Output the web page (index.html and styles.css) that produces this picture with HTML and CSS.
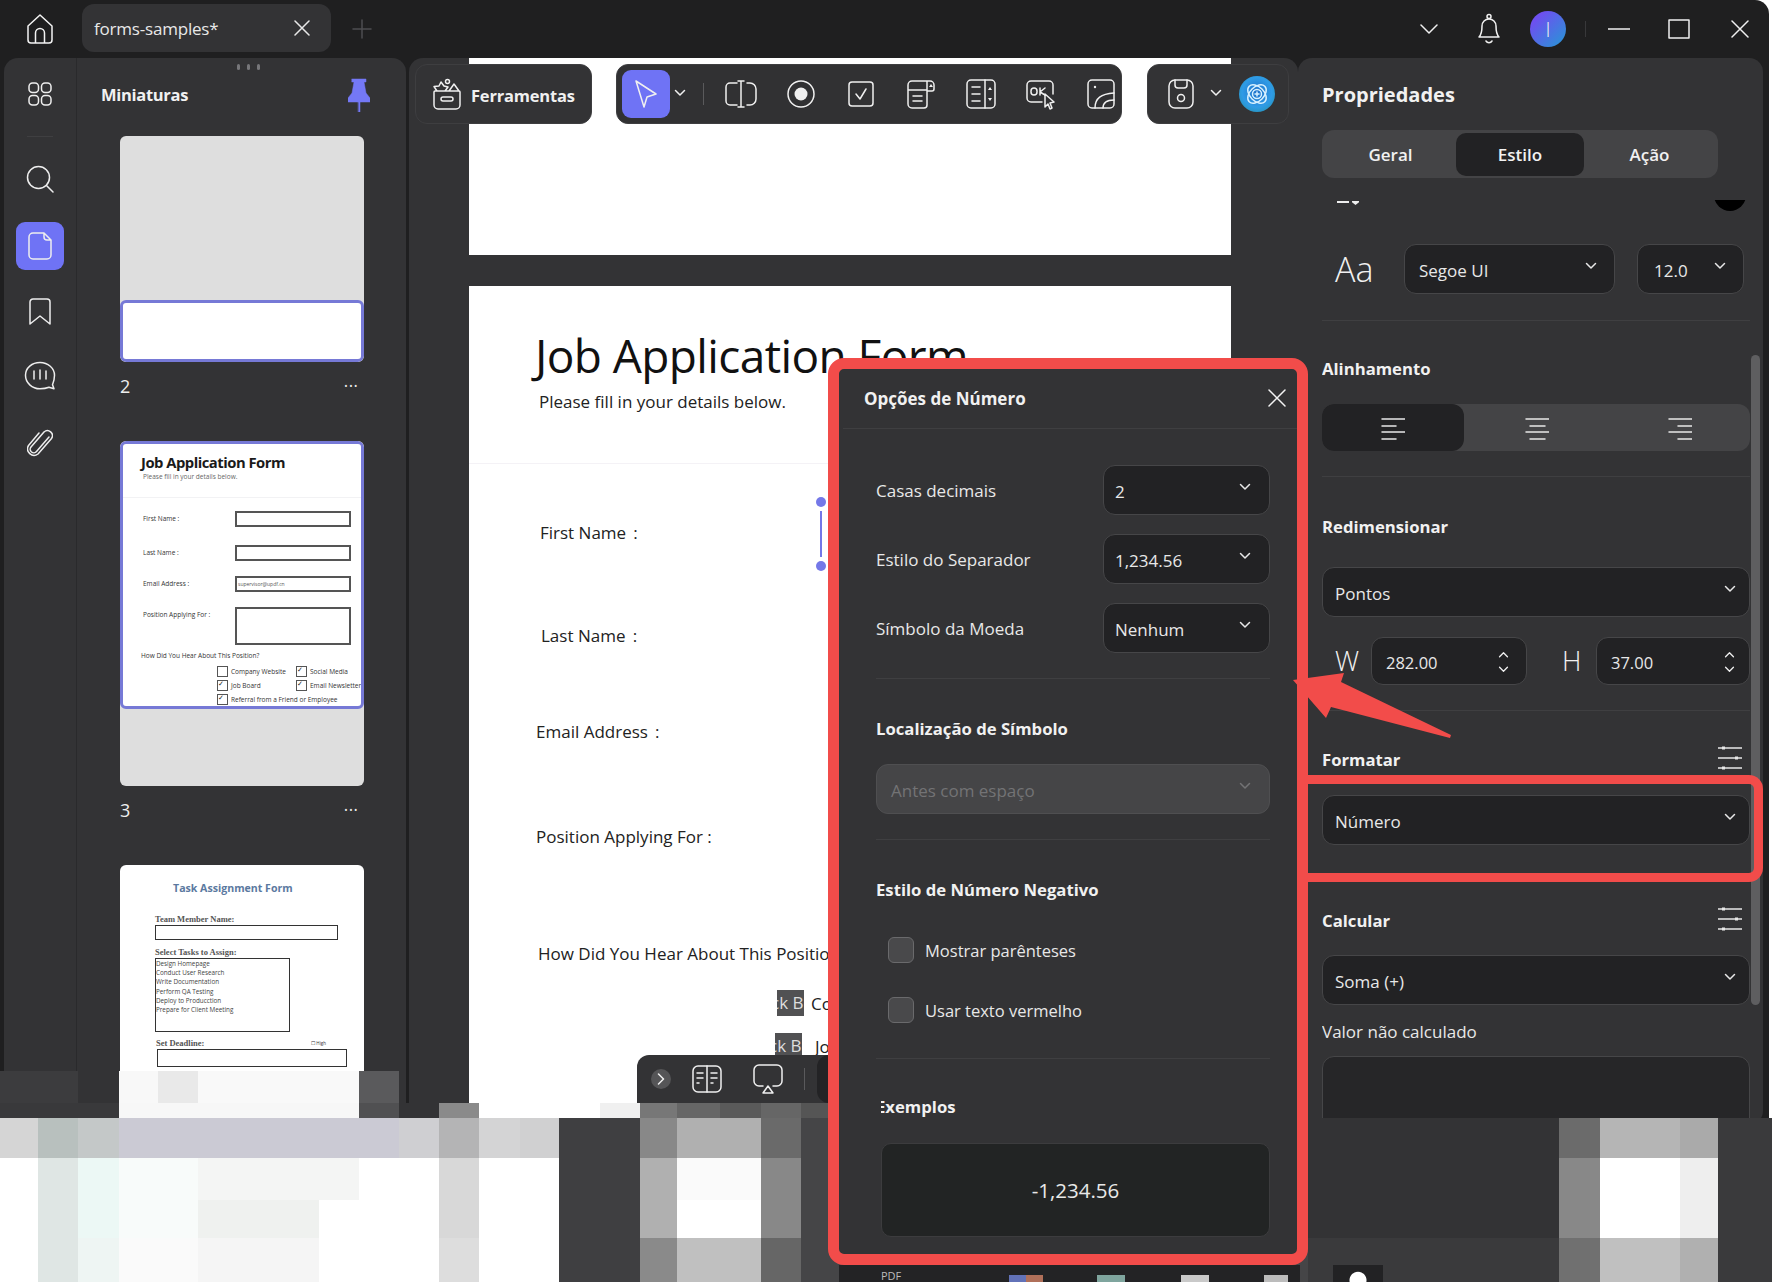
FILE: index.html
```html
<!DOCTYPE html>
<html lang="pt">
<head>
    <meta charset="UTF-8">
    <title>forms-samples*</title>
    <link rel="stylesheet" href="styles.css">
</head>
<body>

<svg class="defs" width="0" height="0">
    <symbol id="chev" viewBox="0 0 12 8"><path d="M1.5 1.5 6 6l4.5-4.5"/></symbol>
    <symbol id="sliders" viewBox="0 0 24 24"><path d="M0 2h24M0 12h24M0 22h24"/><path class="solid" d="M4 .5h3v3H4zM17 10.500h3v3h-3zM4 20.500h3v3H4z"/></symbol>
</svg>

<div class="app">
    <!-- Title bar -->
    <header class="titlebar">
        <svg class="home-icon" viewBox="0 0 28 32" width="28" height="32"><path d="M2 13 14 2l12 11v14a3 3 0 0 1-3 3H5a3 3 0 0 1-3-3zM9.500 30V20a4.500 4.500 0 0 1 9 0v10"/></svg>
        <div class="tab">
            <span>forms-samples*</span>
            <svg viewBox="0 0 16 16" width="16" height="16"><path d="m1 1 14 14M15 1 1 15"/></svg>
        </div>
        <svg class="tab-add" viewBox="0 0 20 20" width="20" height="20"><path d="M10 1v18M1 10h18"/></svg>
        <div class="title-actions">
            <svg class="chev-big" viewBox="0 0 18 10" width="18" height="10"><path d="m1 1 8 8 8-8"/></svg>
            <svg class="bell" viewBox="0 0 24 32" width="24" height="32"><path d="M2 24c2-2 3-4 3-11a7 7 0 0 1 14 0c0 7 1 9 3 11zM9 28a3.500 3.500 0 0 0 6 0"/><circle cx="12" cy="3.500" r="2"/></svg>
            <div class="avatar">I</div>
            <div class="title-sep"></div>
            <svg class="win-btn win-min" viewBox="0 0 22 2" width="22" height="2"><path d="M0 1h22"/></svg>
            <svg class="win-btn win-max" viewBox="0 0 22 20" width="22" height="20"><path d="M1 1h20v18H1z"/></svg>
            <svg class="win-btn win-close" viewBox="0 0 18 18" width="18" height="18"><path d="m1 1 16 16M17 1 1 17"/></svg>
        </div>
    </header>

    <div class="workspace">
        <!-- Left: icon rail + thumbnails -->
        <aside class="left-panel">
            <nav class="rail">
                <div class="rail-slot rail-first">
                    <svg viewBox="0 0 24 24" width="24" height="24"><rect x="1" y="1" width="9.500" height="9.500" rx="3.500"/><rect x="13.500" y="1" width="9.500" height="9.500" rx="3.500"/><rect x="1" y="13.500" width="9.500" height="9.500" rx="3.500"/><rect x="13.500" y="13.500" width="9.500" height="9.500" rx="3.500"/></svg>
                </div>
                <div class="rail-sep"></div>
                <div class="rail-slot rail-search">
                    <svg viewBox="0 0 28 28" width="28" height="28"><circle cx="12.500" cy="12.500" r="11"/><path d="m20.500 20.500 6.500 6.500"/></svg>
                </div>
                <div class="rail-slot rail-active">
                    <svg viewBox="0 0 24 28" width="24" height="28"><path d="M5 1h11l7 7v15a4 4 0 0 1-4 4H5a4 4 0 0 1-4-4V5a4 4 0 0 1 4-4zM16 1v4a3 3 0 0 0 3 3h4"/></svg>
                </div>
                <div class="rail-slot rail-mark">
                    <svg viewBox="0 0 22 28" width="22" height="28"><path d="M4 1h14a3 3 0 0 1 3 3v22l-10-8-10 8V4a3 3 0 0 1 3-3z"/></svg>
                </div>
                <div class="rail-slot rail-tight">
                    <svg viewBox="0 0 32 30" width="32" height="30"><path d="M16 1.500c8 0 14.500 5.700 14.500 12.800 0 4.300-1 7-2 9.500l1.500 4-5-1.500c-2.500 1-5.500 1.500-9 1.500-8 0-14.500-6-14.500-13.500S8 1.500 16 1.500z"/><path d="M10 10v8M16 9v9M22 10v8"/></svg>
                </div>
                <div class="rail-slot rail-mark">
                    <svg viewBox="0 0 26 30" width="26" height="30"><path d="M22 10 9.500 24.500a3.500 3.500 0 0 1-5.500-4.500L17 5a5 5 0 0 1 7.500 6.500L11 27a6.500 6.500 0 0 1-9.500-8.500L12 6"/></svg>
                </div>
            </nav>

            <div class="thumb-pane">
                <div class="grip"><i></i><i></i><i></i></div>
                <div class="pane-head">
                    <span class="pane-title">Miniaturas</span>
                    <svg class="pin" viewBox="0 0 22 34" width="22" height="34"><path d="M4 1h14v3h-2l2 11 4 5v4H0v-4l4-5 2-11H4zM10.500 24h1.500v10h-1.500z"/></svg>
                </div>

                <div class="thumb thumb-page2">
                    <div class="thumb-selected"></div>
                </div>
                <div class="thumb-foot"><span>2</span><span class="dots">•••</span></div>

                <div class="thumb thumb-page3">
                    <div class="thumb-selected mini-form">
                        <div class="mf-title">Job Application Form</div>
                        <div class="mf-sub">Please fill in your details below.</div>
                        <div class="mf-rule"></div>
                        <div class="mf-row mf-r1"><span>First Name :</span><i></i></div>
                        <div class="mf-row mf-r2"><span>Last Name :</span><i></i></div>
                        <div class="mf-row mf-r3"><span>Email Address :</span><i>supervisor@updf.cn</i></div>
                        <div class="mf-row mf-r4"><span>Position Applying For :</span><i></i></div>
                        <div class="mf-how">How Did You Hear About This Position?</div>
                        <div class="mf-checks">
                            <span class="mf-check off">Company Website</span>
                            <span class="mf-check">Social Media</span>
                            <span class="mf-check">Job Board</span>
                            <span class="mf-check">Email Newsletter</span>
                            <span class="mf-check mf-wide">Referral from a Friend or Employee</span>
                        </div>
                    </div>
                </div>
                <div class="thumb-foot"><span>3</span><span class="dots">•••</span></div>

                <div class="thumb thumb-page4">
                    <div class="tf-title">Task Assignment Form</div>
                    <div class="tf-label tf-team">Team Member Name:</div>
                    <div class="tf-box tf-name"></div>
                    <div class="tf-label">Select Tasks to Assign:</div>
                    <div class="tf-box tf-list">
                        <div>Design Homepage</div>
                        <div>Conduct User Research</div>
                        <div>Write Documentation</div>
                        <div>Perform QA Testing</div>
                        <div>Deploy to Producction</div>
                        <div>Prepare for Client Meeting</div>
                    </div>
                    <div class="tf-deadline"><span class="tf-label">Set Deadline:</span><span class="tf-high">☐ High</span></div>
                    <div class="tf-box tf-date"></div>
                </div>
            </div>
        </aside>

        <!-- Center: document -->
        <main class="doc-area">
            <div class="page page-blank"></div>
            <div class="page page-form">
                <h1>Job Application Form</h1>
                <p class="page-sub">Please fill in your details below.</p>
                <div class="page-rule"></div>
                <div class="form-label fl-first">First Name&thinsp;&nbsp;:</div>
                <div class="form-label fl-last">Last Name&thinsp;&nbsp;:</div>
                <div class="form-label fl-email">Email Address&thinsp;&nbsp;:</div>
                <div class="form-label fl-pos">Position Applying For :</div>
                <div class="form-label fl-how">How Did You Hear About This Position?</div>
                <div class="check-row cr-one"><span class="ck-box">Check Box</span><span>Company Website</span></div>
                <div class="check-row cr-two"><span class="ck-box">Check Box</span><span>Job Board</span></div>
                <div class="selection"><i></i><b></b><i></i></div>
            </div>

            <div class="toolbar">
                <div class="tool-group tools-btn">
                    <svg viewBox="0 0 30 32" width="30" height="32"><path d="M3 13h24a1 1 0 0 1 1 1v13a4 4 0 0 1-4 4H6a4 4 0 0 1-4-4V14a1 1 0 0 1 1-1zM11 19h8a1.500 1.500 0 0 1 0 4h-8a1.500 1.500 0 0 1 0-4zM5 13 2 8.500l5-.5 2-4 3 4 4 1-3 4M17 13l5-7 5 7M13.500 3.500a2 2 0 1 0 4 0 2 2 0 1 0-4 0"/></svg>
                    <span>Ferramentas</span>
                </div>
                <div class="tool-group tools-main">
                    <div class="tool-active">
                        <svg viewBox="0 0 24 30" width="24" height="30"><path d="M2 2 22 15l-9 3-3 10z"/></svg>
                    </div>
                    <svg class="tool-chev"><use href="#chev"/></svg>
                    <div class="tool-sep"></div>
                    <svg class="tool-ico" viewBox="0 0 34 28" width="34" height="28"><path d="M13 3H6a4 4 0 0 0-4 4v14a4 4 0 0 0 4 4h7M23 3h3a6 6 0 0 1 6 6v10a6 6 0 0 1-6 6h-3M14 1h6M14 27h6M17 1v26"/></svg>
                    <svg class="tool-ico" viewBox="0 0 28 28" width="28" height="28"><circle cx="14" cy="14" r="13"/><circle class="solid" cx="14" cy="14" r="6.500"/></svg>
                    <svg class="tool-ico" viewBox="0 0 26 26" width="26" height="26"><rect x="1" y="1" width="24" height="24" rx="3"/><path d="m8 13 4 5 6-10"/></svg>
                    <svg class="tool-ico" viewBox="0 0 30 30" width="30" height="30"><path d="M2 6a4 4 0 0 1 4-4h15v24a3 3 0 0 1-3 3H6a4 4 0 0 1-4-4zM21 2h3a4 4 0 0 1 4 4v4a2 2 0 0 1-2 2h-5M2 11h19M7 17h9M7 22h9"/><path class="solid" d="m23 8 2-3 2 3z"/></svg>
                    <svg class="tool-ico" viewBox="0 0 30 30" width="30" height="30"><rect x="1" y="1" width="28" height="28" rx="4"/><path d="M19 1v28M6 8h8M6 15h8M6 22h8"/><path class="solid" d="m22 11 2-3 2 3zM22 19l2 3 2-3z"/></svg>
                    <svg class="tool-ico" viewBox="0 0 32 32" width="32" height="32"><path d="M17 24H6a4 4 0 0 1-4-4V7a4 4 0 0 1 4-4h18a4 4 0 0 1 4 4v9"/><path d="M9 10a3 3 0 0 1 3 3v1a3 3 0 0 1-6 0v-1a3 3 0 0 1 3-3zM15 10v7M20 10l-5 4 5 3"/><path class="cursor" d="m20 16 9 8-4 1 2 5-2 1-2-5-3 3z"/></svg>
                    <svg class="tool-ico" viewBox="0 0 28 30" width="28" height="30"><rect x="1" y="1" width="26" height="28" rx="4"/><path d="M8 29c0-10 6-14 19-15M16 29c0-5 4-8 11-8"/><circle class="solid" cx="8" cy="8" r="1.200"/></svg>
                </div>
                <div class="tool-group tools-end">
                    <svg class="tool-ico" viewBox="0 0 26 30" width="26" height="30"><rect x="1" y="1" width="24" height="28" rx="6"/><path d="M7 1v5a3 3 0 0 0 3 3h6a3 3 0 0 0 3-3V1"/><circle cx="13" cy="19" r="3.500"/></svg>
                    <svg class="tool-chev"><use href="#chev"/></svg>
                    <div class="ai-orb">
                        <svg viewBox="0 0 36 36" width="36" height="36"><ellipse cx="18" cy="18" rx="11" ry="7" transform="rotate(45 18 18)"/><ellipse cx="18" cy="18" rx="11" ry="7" transform="rotate(-45 18 18)"/><circle cx="18" cy="18" r="4.500"/><path d="M18 16v4M16 18h4"/></svg>
                    </div>
                </div>
            </div>

            <div class="view-bar">
                <div class="view-toggle"><svg viewBox="0 0 8 12" width="8" height="12"><path d="m1.500 1 5 5-5 5"/></svg></div>
                <svg class="tool-ico" viewBox="0 0 30 28" width="30" height="28"><rect x="1" y="1" width="28" height="26" rx="5"/><path d="M15 1v26M5 8h6M5 13h6M5 18h2M19 8h6M19 13h6M19 18h2"/></svg>
                <svg class="tool-ico" viewBox="0 0 32 30" width="32" height="30"><path d="M11 22H7a5 5 0 0 1-5-5V6a5 5 0 0 1 5-5h18a5 5 0 0 1 5 5v11a5 5 0 0 1-5 5h-4M16 22l5 7H11z"/></svg>
                <div class="tool-sep"></div>
                <div class="view-inner"></div>
            </div>
        </main>

        <!-- Right: properties -->
        <aside class="props">
            <h2 class="props-title">Propriedades</h2>
            <div class="seg-tabs">
                <div>Geral</div>
                <div class="on">Estilo</div>
                <div>Ação</div>
            </div>
            <div class="props-scroll">
                <div class="cut-row">
                    <span class="cut-dash"></span>
                    <span class="cut-dot"></span>
                </div>
                <div class="font-row">
                    <span class="aa">Aa</span>
                    <div class="select sel-font"><span>Segoe UI</span><svg><use href="#chev"/></svg></div>
                    <div class="select sel-size"><span>12.0</span><svg><use href="#chev"/></svg></div>
                </div>
                <div class="rule rule-font"></div>

                <h3 class="prop-head ph-align">Alinhamento</h3>
                <div class="align-seg">
                    <div class="on"><svg viewBox="0 0 24 24" width="24" height="24"><path d="M1 3h23M1 10h14M1 16h23M1 23h14"/></svg></div>
                    <div><svg viewBox="0 0 24 24" width="24" height="24"><path d="M1 3h23M5 10h15M1 16h23M5 23h15"/></svg></div>
                    <div><svg viewBox="0 0 24 24" width="24" height="24"><path d="M1 3h23M10 10h14M1 16h23M10 23h14"/></svg></div>
                </div>
                <div class="rule rule-align"></div>

                <h3 class="prop-head ph-resize">Redimensionar</h3>
                <div class="select sel-wide sel-points"><span>Pontos</span><svg><use href="#chev"/></svg></div>
                <div class="size-row">
                    <span class="dim-w">W</span>
                    <div class="select sel-num"><span>282.00</span><div class="spin"><svg><use href="#chev"/></svg><svg><use href="#chev"/></svg></div></div>
                    <span class="dim-h">H</span>
                    <div class="select sel-num sel-num-h"><span>37.00</span><div class="spin"><svg><use href="#chev"/></svg><svg><use href="#chev"/></svg></div></div>
                </div>
                <div class="rule rule-size"></div>

                <div class="head-row hr-format">
                    <h3 class="prop-head">Formatar</h3>
                    <svg class="slider-ico"><use href="#sliders"/></svg>
                </div>
                <div class="select sel-wide sel-format"><span>Número</span><svg><use href="#chev"/></svg></div>

                <div class="head-row hr-calc">
                    <h3 class="prop-head">Calcular</h3>
                    <svg class="slider-ico"><use href="#sliders"/></svg>
                </div>
                <div class="select sel-wide sel-calc"><span>Soma (+)</span><svg><use href="#chev"/></svg></div>
                <div class="plain-label">Valor não calculado</div>
                <div class="value-box"></div>
            </div>
            <div class="props-scrollbar"></div>
        </aside>
    </div>
</div>

<!-- Pixelated cover at the bottom of the screenshot -->
<div class="mosaic">
    <div class="m-a"></div>
    <div class="m-b"></div>
    <div class="m-c"></div>
    <div class="m-d"></div>
    <div class="m-e"></div>
    <div class="m-f"></div>
</div>

<!-- Dialog with the red annotation frame -->
<section class="dialog">
    <div class="dialog-head">
        <span>Opções de Número</span>
        <svg viewBox="0 0 18 18" width="18" height="18"><path d="m1 1 16 16M17 1 1 17"/></svg>
    </div>
    <div class="dialog-body">
        <div class="opt-row"><label>Casas decimais</label><div class="select sel-opt"><span>2</span><svg><use href="#chev"/></svg></div></div>
        <div class="opt-row"><label>Estilo do Separador</label><div class="select sel-opt"><span>1,234.56</span><svg><use href="#chev"/></svg></div></div>
        <div class="opt-row"><label>Símbolo da Moeda</label><div class="select sel-opt"><span>Nenhum</span><svg><use href="#chev"/></svg></div></div>
        <div class="rule rule-dlg"></div>
        <h3 class="prop-head ph-dlg">Localização de Símbolo</h3>
        <div class="select sel-disabled"><span>Antes com espaço</span><svg><use href="#chev"/></svg></div>
        <div class="rule rule-dlg"></div>
        <h3 class="prop-head ph-dlg">Estilo de Número Negativo</h3>
        <div class="check-line"><span class="checkbox"></span>Mostrar parênteses</div>
        <div class="check-line"><span class="checkbox"></span>Usar texto vermelho</div>
        <div class="rule rule-dlg"></div>
        <h3 class="prop-head ph-dlg ph-examples">Exemplos</h3>
        <div class="example-box">-1,234.56</div>
    </div>
</section>

<div class="format-mark"></div>
<svg class="arrow" viewBox="0 0 170 70" width="170" height="70"><path d="M2 12 53 5l-3 9 110 53-1 3-119-31-5 11z"/></svg>

<div class="below-dialog">
    <span class="pdf-tag">PDF</span>
    <i class="bit bit-a"></i><i class="bit bit-b"></i><i class="bit bit-c"></i><i class="bit bit-d"></i><i class="bit bit-e"></i>
</div>

</body>
</html>
```

FILE: styles.css
```css
* {
    box-sizing: border-box;
}
body {
    margin: 0;
    width: 1772px;
    height: 1282px;
    overflow: hidden;
    position: relative;
    background-color: #fff;
    color: #f1f1f1;
    font-family: "Open Sans", "Noto Sans", sans-serif;
    font-size: 17px;
}
svg {
    display: block;
    flex-shrink: 0;
}
svg path, svg rect, svg circle, svg ellipse {
    fill: none;
    stroke: currentColor;
    stroke-width: 1.5;
    stroke-linecap: round;
    stroke-linejoin: round;
}
svg .solid {
    fill: currentColor;
    stroke: none;
}
.defs {
    position: absolute;
}
h1, h2, h3, p {
    margin: 0;
}
.app {
    width: 1769px;
    height: 1282px;
    background-color: #1f1f20;
    border-top-right-radius: 14px;
    display: flex;
    flex-direction: column;
}

/* Title bar */
.titlebar {
    height: 58px;
    display: flex;
    align-items: center;
    padding-left: 26px;
    flex-shrink: 0;
}
.home-icon {
    color: #f4f4f4;
}
.tab {
    width: 249px;
    height: 48px;
    margin-left: 28px;
    margin-top: -2px;
    padding: 0 21px 0 12px;
    background-color: #333335;
    border-radius: 12px;
    display: flex;
    align-items: center;
    justify-content: space-between;
    font-size: 17px;
    letter-spacing: -0.2px;
    color: #e8e8e8;
}
.tab-add {
    margin-left: 21px;
    color: #4e4e50;
}
.title-actions {
    margin-left: auto;
    display: flex;
    align-items: center;
    position: relative;
    color: #f0f0f0;
}
.chev-big {
    margin-right: 39px;
}
.bell {
    margin-right: 29px;
}
.avatar {
    width: 36px;
    height: 36px;
    border-radius: 50%;
    background: linear-gradient(135deg, #6d50f0 20%, #2d90d8 90%);
    display: flex;
    align-items: center;
    justify-content: center;
    font-size: 20px;
    font-weight: 300;
}
.title-sep {
    width: 1px;
    height: 16px;
    margin-left: 19px;
    margin-right: 22px;
    background-color: #38383a;
}
.win-min {
    margin-right: 38px;
}
.win-max {
    margin-right: 41px;
}
.win-close {
    margin-right: 20px;
}

/* Workspace */
.workspace {
    flex: 1;
    display: flex;
    padding-left: 4px;
}
.left-panel {
    width: 402px;
    background-color: #333335;
    border-radius: 14px 14px 0 0;
    display: flex;
}
.rail {
    width: 73px;
    border-right: 1px solid #2a2a2c;
    padding-top: 12px;
    display: flex;
    flex-direction: column;
    align-items: center;
    color: #eee;
}
.rail-slot {
    width: 48px;
    height: 48px;
    margin-top: 19px;
    display: flex;
    align-items: center;
    justify-content: center;
    border-radius: 9px;
    flex-shrink: 0;
}
.rail-first {
    margin-top: 0;
}
.rail-search {
    margin-top: 18px;
}
.rail-tight {
    margin-top: 16px;
}
.rail-mark {
    margin-top: 18px;
}
.rail-active {
    background-color: #6f73f5;
    margin-top: 19px;
}
.rail-sep {
    width: 26px;
    height: 1px;
    margin-top: 18px;
    background-color: #3f3f41;
}
.thumb-pane {
    flex: 1;
    padding-left: 43px;
    position: relative;
}
.grip {
    height: 18px;
    padding-top: 6px;
    padding-left: 117px;
    display: flex;
    gap: 7px;
}
.grip i {
    width: 3px;
    height: 6px;
    background-color: #77777a;
    border-radius: 2px;
}
.pane-head {
    height: 60px;
    margin-left: -19px;
    width: 269px;
    display: flex;
    align-items: flex-start;
    justify-content: space-between;
}
.pane-title {
    font-weight: 700;
    font-size: 16.5px;
    line-height: 38px;
    letter-spacing: -0.3px;
}
.pin {
    color: #7478f6;
    margin-top: 2px;
}
.pin path {
    fill: #7478f6;
    stroke-width: 0.5;
}
.thumb {
    width: 244px;
    background-color: #dedede;
    border-radius: 6px;
    overflow: hidden;
    display: flex;
    flex-direction: column;
}
.thumb-selected {
    background-color: #fff;
    border: 3px solid #7679d6;
    border-radius: 6px;
}
.thumb-page2 {
    height: 226px;
    justify-content: flex-end;
}
.thumb-page2 .thumb-selected {
    height: 62px;
}
.thumb-foot {
    width: 244px;
    height: 79px;
    padding-top: 12px;
    display: flex;
    justify-content: space-between;
    font-size: 18px;
    line-height: 24px;
    color: #eee;
}
.dots {
    font-size: 9px;
    letter-spacing: 1.500px;
    margin-right: 5px;
}
.thumb-page3 {
    height: 345px;
}

/* mini form in thumbnail 3 */
.mini-form {
    height: 268px;
    color: #333;
    font-size: 6.500px;
    padding-left: 18px;
    flex-shrink: 0;
    overflow: hidden;
}
.mf-title {
    font-size: 14.800px;
    line-height: 20px;
    margin-top: 8px;
    font-weight: 700;
    color: #1a1a1a;
    letter-spacing: -0.5px;
}
.mf-sub {
    line-height: 9px;
    margin-left: 2px;
    margin-top: 0;
    color: #666;
}
.mf-rule {
    height: 1px;
    background-color: #f2f2f4;
    margin: 16px 0 0 -18px;
}
.mf-row {
    display: flex;
    padding-left: 2px;
}
.mf-row span {
    width: 92px;
    line-height: 15px;
}
.mf-row i {
    width: 116px;
    height: 16px;
    border: 2px solid #555;
    font-style: normal;
    font-size: 5px;
    line-height: 12px;
    color: #555;
    padding-left: 1px;
}
.mf-r1 {
    margin-top: 13px;
}
.mf-r2 {
    margin-top: 18px;
}
.mf-r3 {
    margin-top: 15px;
}
.mf-r4 {
    margin-top: 15px;
}
.mf-r4 i {
    height: 38px;
}
.mf-how {
    margin-top: 6px;
    line-height: 9px;
}
.mf-checks {
    display: grid;
    grid-template-columns: 79px 1fr;
    row-gap: 3px;
    margin-left: 76px;
    margin-top: 6px;
}
.mf-check {
    display: flex;
    align-items: center;
    gap: 3px;
    line-height: 10px;
    white-space: nowrap;
}
.mf-check::before {
    content: "✓";
    width: 9px;
    height: 9px;
    border: 1.500px solid #555;
    font-size: 7px;
    line-height: 6px;
    color: #222;
    flex-shrink: 0;
}
.mf-check.off::before {
    content: "";
}
.mf-wide {
    grid-column: span 2;
}

/* thumbnail 4 */
.thumb-page4 {
    height: 260px;
    background-color: #fff;
    color: #333;
    padding-left: 35px;
    flex-shrink: 0;
}
.tf-title {
    margin-top: 14px;
    margin-left: 18px;
    line-height: 18px;
    font-size: 10.600px;
    font-weight: 700;
    color: #5b79a0;
}
.tf-label {
    font-family: "Liberation Serif", serif;
    font-weight: 700;
    font-size: 8.500px;
    line-height: 12px;
    color: #555;
}
.tf-team {
    margin-top: 16px;
}
.tf-box {
    border: 1.500px solid #333;
}
.tf-name {
    width: 183px;
    height: 15px;
    margin-bottom: 6px;
}
.tf-list {
    width: 135px;
    height: 74px;
    margin-top: 0;
    font-size: 6.300px;
    line-height: 9.200px;
    padding-top: 0;
    color: #444;
}
.tf-deadline {
    width: 170px;
    display: flex;
    justify-content: space-between;
    margin-top: 5px;
    margin-left: 1px;
}
.tf-high {
    font-size: 4.500px;
    line-height: 12px;
}
.tf-date {
    width: 190px;
    height: 18px;
    margin-left: 2px;
}

/* Document area */
.doc-area {
    width: 889px;
    margin-left: 3px;
    padding-left: 60px;
    background-color: #333335;
    border-radius: 14px 14px 0 0;
    position: relative;
    overflow: hidden;
}
.page {
    width: 762px;
    background-color: #fff;
    color: #111;
}
.page-blank {
    height: 197px;
    margin-bottom: 31px;
}
.page-form {
    height: 900px;
    position: relative;
    overflow: hidden;
}
.page-form h1 {
    font-size: 46px;
    font-weight: 400;
    line-height: 60px;
    margin-top: 0;
    padding-top: 39px;
    height: 101px;
    padding-left: 66px;
    letter-spacing: -0.6px;
}
.page-sub {
    font-size: 17px;
    line-height: 24px;
    margin-top: 3px;
    padding-left: 70px;
    color: #222;
}
.page-rule {
    height: 1px;
    margin-top: 49px;
    background-color: #f4f2f6;
}
.form-label {
    font-size: 17px;
    line-height: 24px;
    white-space: nowrap;
    color: #222;
}
.fl-first {
    margin-top: 57px;
    padding-left: 71px;
}
.fl-last {
    margin-top: 79px;
    padding-left: 72px;
}
.fl-email {
    margin-top: 72px;
    padding-left: 67px;
}
.fl-pos {
    margin-top: 81px;
    padding-left: 67px;
}
.fl-how {
    margin-top: 93px;
    padding-left: 69px;
}
.check-row {
    display: flex;
    align-items: center;
    gap: 7px;
    font-size: 17px;
    color: #222;
    white-space: nowrap;
}
.ck-box {
    width: 27px;
    height: 26px;
    padding-right: 18px;
    background-color: #515153;
    color: #ddd;
    overflow: hidden;
    display: flex;
    justify-content: center;
    font-size: 17px;
    line-height: 26px;
    flex-shrink: 0;
}
.cr-one {
    margin-top: 24px;
    padding-left: 308px;
}
.cr-two {
    margin-top: 17px;
    padding-left: 306px;
    gap: 13px;
}
.selection {
    position: absolute;
    left: 347px;
    top: 211px;
    width: 10px;
    display: flex;
    flex-direction: column;
    align-items: center;
}
.selection i {
    width: 10px;
    height: 10px;
    border-radius: 50%;
    background-color: #7478e8;
}
.selection b {
    width: 1.500px;
    height: 46px;
    margin: 4px 0;
    background-color: #7478e8;
}

/* Floating toolbars */
.toolbar {
    position: absolute;
    left: 6px;
    top: 6px;
    display: flex;
    color: #f0f0f0;
}
.tool-group {
    height: 60px;
    background-color: #333335;
    border: 1px solid #3e3e40;
    border-radius: 12px;
    display: flex;
    align-items: center;
}
.tools-btn {
    width: 177px;
    padding-left: 16px;
    gap: 9px;
    font-weight: 700;
    font-size: 16.500px;
    letter-spacing: -0.2px;
}
.tools-btn span {
    padding-top: 3px;
}
.tools-main {
    width: 506px;
    margin-left: 24px;
    padding-left: 5px;
    background-color: #313133;
}
.tools-end {
    width: 142px;
    margin-left: 25px;
    padding-left: 20px;
}
.tool-active {
    width: 48px;
    height: 48px;
    background-color: #6f73f5;
    border-radius: 9px;
    display: flex;
    align-items: center;
    justify-content: center;
    flex-shrink: 0;
}
.tool-chev {
    width: 12px;
    height: 8px;
    margin-left: 4px;
    margin-top: -3px;
}
.tool-sep {
    width: 1px;
    height: 22px;
    margin-left: 17px;
    margin-right: 7px;
    background-color: #5a5a5c;
    flex-shrink: 0;
}
.tools-main .tool-ico {
    width: 60px;
}
.tools-end .tool-chev {
    margin-left: 16px;
}
.ai-orb {
    width: 36px;
    height: 36px;
    margin-left: 17px;
    border-radius: 50%;
    background: radial-gradient(circle at 50% 45%, #1d6fc8 0%, #2f9be6 55%, #1f8f9e 100%);
    color: #d8f1ff;
}
.view-bar {
    position: absolute;
    left: 228px;
    top: 997px;
    width: 300px;
    height: 60px;
    background-color: #333335;
    border-radius: 12px 0 0 0;
    display: flex;
    align-items: center;
    padding-left: 14px;
    padding-bottom: 12px;
    color: #f0f0f0;
}
.view-toggle {
    width: 20px;
    height: 20px;
    border-radius: 50%;
    background-color: #555557;
    display: flex;
    align-items: center;
    justify-content: center;
}
.view-bar .tool-ico {
    margin-left: 21px;
}
.view-bar .tool-ico + .tool-ico {
    margin-left: 30px;
}
.view-bar .tool-sep {
    margin-left: 20px;
    margin-right: 0;
}
.view-inner {
    width: 60px;
    height: 48px;
    margin-left: 12px;
    border-radius: 12px 0 0 12px;
    background-color: #232325;
}

/* Properties panel */
.props {
    width: 465px;
    height: 1067px;
    padding: 23px 0 0 24px;
    background-color: #333335;
    border-radius: 14px;
    position: relative;
}
.props-title {
    font-size: 20px;
    font-weight: 700;
    line-height: 28px;
}
.seg-tabs {
    width: 396px;
    height: 48px;
    margin-top: 21px;
    padding: 3px 3px;
    background-color: #444446;
    border-radius: 12px;
    display: grid;
    grid-template-columns: 131px 128px 1fr;
    text-align: center;
    font-weight: 600;
    font-size: 17px;
    line-height: 43px;
}
.seg-tabs .on {
    background-color: #222224;
    border-radius: 10px;
}
.props-scroll {
    margin-top: 22px;
    width: 428px;
    height: 925px;
    overflow: hidden;
}
.cut-row {
    height: 11px;
    overflow: hidden;
    display: flex;
    justify-content: space-between;
    padding-left: 15px;
    padding-right: 4px;
}
.cut-dash {
    width: 12px;
    height: 2px;
    margin-top: 1px;
    background-color: #eee;
    position: relative;
}
.cut-dash::after {
    content: "";
    position: absolute;
    left: 15px;
    top: 0;
    width: 7px;
    height: 4px;
    background-color: #eee;
    clip-path: polygon(0 0, 100% 0, 100% 30%, 50% 100%, 0 30%);
}
.cut-dot {
    width: 32px;
    height: 32px;
    margin-top: -21px;
    border-radius: 50%;
    background-color: #000;
}
.select {
    height: 50px;
    background-color: #222224;
    border: 1px solid #464648;
    border-radius: 12px;
    padding: 2px 15px 0 14px;
    display: flex;
    align-items: center;
    justify-content: space-between;
    font-size: 17px;
    color: #e8e8e8;
}
.select > svg {
    width: 12px;
    height: 8px;
    margin-top: -8px;
}
.font-row {
    margin-top: 33px;
    display: flex;
    align-items: center;
}
.aa {
    width: 82px;
    padding-left: 13px;
    font-size: 34px;
    font-weight: 300;
    line-height: 50px;
}
.sel-font {
    width: 211px;
    padding-right: 17px;
}
.sel-size {
    width: 107px;
    margin-left: 22px;
    padding-left: 16px;
    padding-right: 17px;
}
.rule {
    height: 1px;
    background-color: #3f3f41;
}
.rule-font {
    margin-top: 26px;
}
.prop-head {
    font-size: 16.700px;
    font-weight: 700;
    line-height: 24px;
}
.ph-align {
    margin-top: 36px;
}
.align-seg {
    margin-top: 23px;
    height: 47px;
    background-color: #444446;
    border-radius: 12px;
    display: grid;
    grid-template-columns: 142px 146px 1fr;
}
.align-seg div {
    display: flex;
    align-items: center;
    justify-content: center;
    color: #e8e8e8;
}
.align-seg .on {
    background-color: #222224;
    border-radius: 12px;
}
.rule-align {
    margin-top: 25px;
}
.ph-resize {
    margin-top: 38px;
}
.sel-wide {
    width: 428px;
    padding-left: 12px;
    padding-right: 13px;
}
.sel-points {
    margin-top: 28px;
}
.size-row {
    margin-top: 20px;
    display: flex;
    align-items: center;
}
.dim-w, .dim-h {
    font-size: 27px;
    font-weight: 300;
    line-height: 48px;
}
.dim-w {
    width: 49px;
    padding-left: 13px;
}
.dim-h {
    width: 69px;
    padding-left: 35px;
}
.sel-num {
    width: 156px;
    height: 48px;
    padding-right: 18px;
    font-size: 16.500px;
}
.sel-num-h {
    width: 154px;
    padding-right: 15px;
}
.spin {
    color: #f0f0f0;
    display: flex;
    flex-direction: column;
    gap: 8px;
    margin-right: -1px;
}
.spin svg {
    width: 11px;
    height: 7px;
}
.spin svg:first-child {
    transform: rotate(180deg);
}
.rule-size {
    margin-top: 25px;
}
.head-row {
    display: flex;
    justify-content: space-between;
    align-items: center;
    height: 24px;
    padding-right: 8px;
}
.hr-format {
    margin-top: 37px;
}
.hr-calc {
    margin-top: 64px;
}
.slider-ico {
    width: 24px;
    height: 24px;
    margin-top: -4px;
    color: #e8e8e8;
}
.sel-format {
    margin-top: 23px;
}
.sel-calc {
    margin-top: 22px;
}
.plain-label {
    margin-top: 15px;
    line-height: 24px;
    font-size: 17px;
    color: #e8e8e8;
}
.value-box {
    margin-top: 12px;
    height: 120px;
    border: 1px solid #464648;
    border-radius: 12px;
    background-color: #262628;
}
.props-scrollbar {
    position: absolute;
    left: 453px;
    top: 297px;
    width: 9px;
    height: 650px;
    border-radius: 5px;
    background-color: #5e5e60;
}

/* Pixelated cover */
.mosaic {
    position: absolute;
    left: 0;
    top: 1071px;
    width: 1772px;
    height: 211px;
    display: flex;
    flex-direction: column;
}
.m-a {
    height: 32px;
    background: linear-gradient(90deg, #3c3c3e 0 78px, #333335 78px 119px, #f8f8f8 119px 158px, #e9e9e9 158px 198px, #f9f9f9 198px 359px, #5a5a5c 359px 399px, transparent 399px);
}
.m-b {
    height: 15px;
    background: linear-gradient(90deg, #39393b 0 119px, #f7f7f7 119px 359px, #505052 359px 399px, #333335 399px 439px, #8a8a8a 439px 479px, #fff 479px 600px, #f0f0f0 600px 640px, #777 640px 677px, #666 677px 720px, #5a5a5a 720px 761px, #666 761px 801px, #555 801px 838px, transparent 838px);
}
.m-c {
    height: 40px;
    background: linear-gradient(90deg, #d5d5d5 0 38px, #b8c0be 38px 78px, #c4c8c8 78px 119px, #cbcad4 119px 399px, #cfcfd2 399px 439px, #b4b4b5 439px 479px, #d4d4d5 479px 520px, #d0d0d1 520px 559px, #3f3f41 559px 640px, #888 640px 677px, #b0b0b0 677px 761px, #6a6a6a 761px 801px, #454547 801px 1308px, #333335 1308px 1559px, #6b6b6b 1559px 1600px, #b5b5b5 1600px 1680px, #aaa 1680px 1718px, #3a3a3c 1718px);
}
.m-d {
    height: 42px;
    background: linear-gradient(90deg, #fff 0 38px, #dfe6e4 38px 78px, #ecf8f5 78px 119px, #f8fbfa 119px 198px, #f4f5f4 198px 359px, #fff 359px 439px, #d8d8d8 439px 479px, #fff 479px 559px, #3f3f41 559px 640px, #b0b0b0 640px 677px, #fafafa 677px 761px, #888 761px 801px, #454547 801px 1308px, #333335 1308px 1559px, #888 1559px 1600px, #fff 1600px 1680px, #eee 1680px 1718px, #3a3a3c 1718px);
}
.m-e {
    height: 38px;
    background: linear-gradient(90deg, #fff 0 38px, #dfe6e4 38px 78px, #ecf8f5 78px 119px, #f8fbfa 119px 198px, #eff1ef 198px 319px, #fff 319px 439px, #d8d8d8 439px 479px, #fff 479px 559px, #3f3f41 559px 640px, #b0b0b0 640px 677px, #fff 677px 761px, #888 761px 801px, #454547 801px 1308px, #333335 1308px 1559px, #888 1559px 1600px, #fff 1600px 1680px, #eee 1680px 1718px, #3a3a3c 1718px);
}
.m-f {
    height: 44px;
    background: linear-gradient(90deg, #fff 0 38px, #dfe6e4 38px 78px, #eef5f3 78px 119px, #fafafa 119px 198px, #f5f5f5 198px 319px, #fff 319px 439px, #ddd 439px 479px, #fff 479px 559px, #3f3f41 559px 640px, #8a8a8a 640px 677px, #c0c0c0 677px 761px, #666 761px 801px, #454547 801px 1308px, #3a3a3c 1308px 1559px, #707070 1559px 1600px, #c0c0c0 1600px 1680px, #b0b0b0 1680px 1718px, #3a3a3c 1718px);
}

/* Number options dialog */
.dialog {
    position: absolute;
    left: 828px;
    top: 358px;
    width: 480px;
    height: 907px;
    background-color: #333335;
    border: 11px solid #f24c4a;
    border-radius: 16px;
}
.dialog-head {
    height: 60px;
    margin-left: 4px;
    padding: 0 11px 0 21px;
    border-bottom: 1px solid #3f3f41;
    display: flex;
    align-items: center;
    justify-content: space-between;
    font-weight: 700;
    font-size: 17px;
}
.dialog-head svg {
    margin-top: -2px;
    color: #f4f4f4;
}
.dialog-body {
    padding: 36px 27px 0 37px;
}
.opt-row {
    display: flex;
    align-items: center;
    justify-content: space-between;
    margin-bottom: 19px;
    font-size: 17px;
    color: #e8e8e8;
}
.sel-opt {
    width: 167px;
    padding-left: 11px;
    padding-right: 18px;
}
.rule-dlg {
    margin-top: 25px;
}
.ph-dlg {
    margin-top: 38px;
}
.sel-disabled {
    margin-top: 23px;
    padding-right: 18px;
    background-color: #454547;
    border-color: #4f4f51;
    color: #737375;
}
.check-line {
    display: flex;
    align-items: center;
    height: 24px;
    margin-top: 36px;
    padding-left: 12px;
    gap: 11px;
    font-size: 16.500px;
    color: #e8e8e8;
}
.checkbox {
    width: 26px;
    height: 26px;
    background-color: #49494b;
    border: 1px solid #6a6a6c;
    border-radius: 6px;
}
.check-line + .rule-dlg {
    margin-top: 36px;
}
.ph-examples {
    margin-top: 36px;
    margin-left: 5px;
    overflow: hidden;
    text-indent: -5px;
}
.example-box {
    margin: 24px 0 0 5px;
    width: 389px;
    height: 94px;
    background-color: #222424;
    border: 1px solid #3c3c3e;
    border-radius: 10px;
    text-align: center;
    line-height: 92px;
    font-size: 20.500px;
    color: #e8e8e8;
}

/* Annotations */
.format-mark {
    position: absolute;
    left: 1307px;
    top: 775px;
    width: 456px;
    height: 107px;
    border: 9px solid #f24c4a;
    border-left: none;
    border-radius: 0 14px 14px 0;
}
.arrow {
    position: absolute;
    left: 1291px;
    top: 668px;
}
.arrow path {
    fill: #f24c4a;
    stroke: none;
}
.below-dialog {
    position: absolute;
    left: 839px;
    top: 1265px;
    width: 550px;
    height: 17px;
    background: linear-gradient(90deg, #232325 0 461px, transparent 461px);
    overflow: hidden;
    font-size: 11px;
    color: #bbb;
}
.pdf-tag {
    position: absolute;
    left: 42px;
    top: 3px;
}
.bit {
    position: absolute;
    top: 10px;
    height: 10px;
}
.bit-a {
    left: 170px;
    width: 34px;
    background: linear-gradient(90deg, #6272b8 0 50%, #b0705a 50%);
}
.bit-b {
    left: 258px;
    width: 28px;
    background-color: #7fa59e;
}
.bit-c {
    left: 342px;
    width: 28px;
    background-color: #c9c9c9;
}
.bit-d {
    left: 425px;
    width: 24px;
    background-color: #bcbcbc;
}
.bit-e {
    left: 494px;
    top: 0;
    width: 50px;
    height: 17px;
    background: radial-gradient(circle at 50% 90%, #fff 0 8px, #222224 9px);
}
```
